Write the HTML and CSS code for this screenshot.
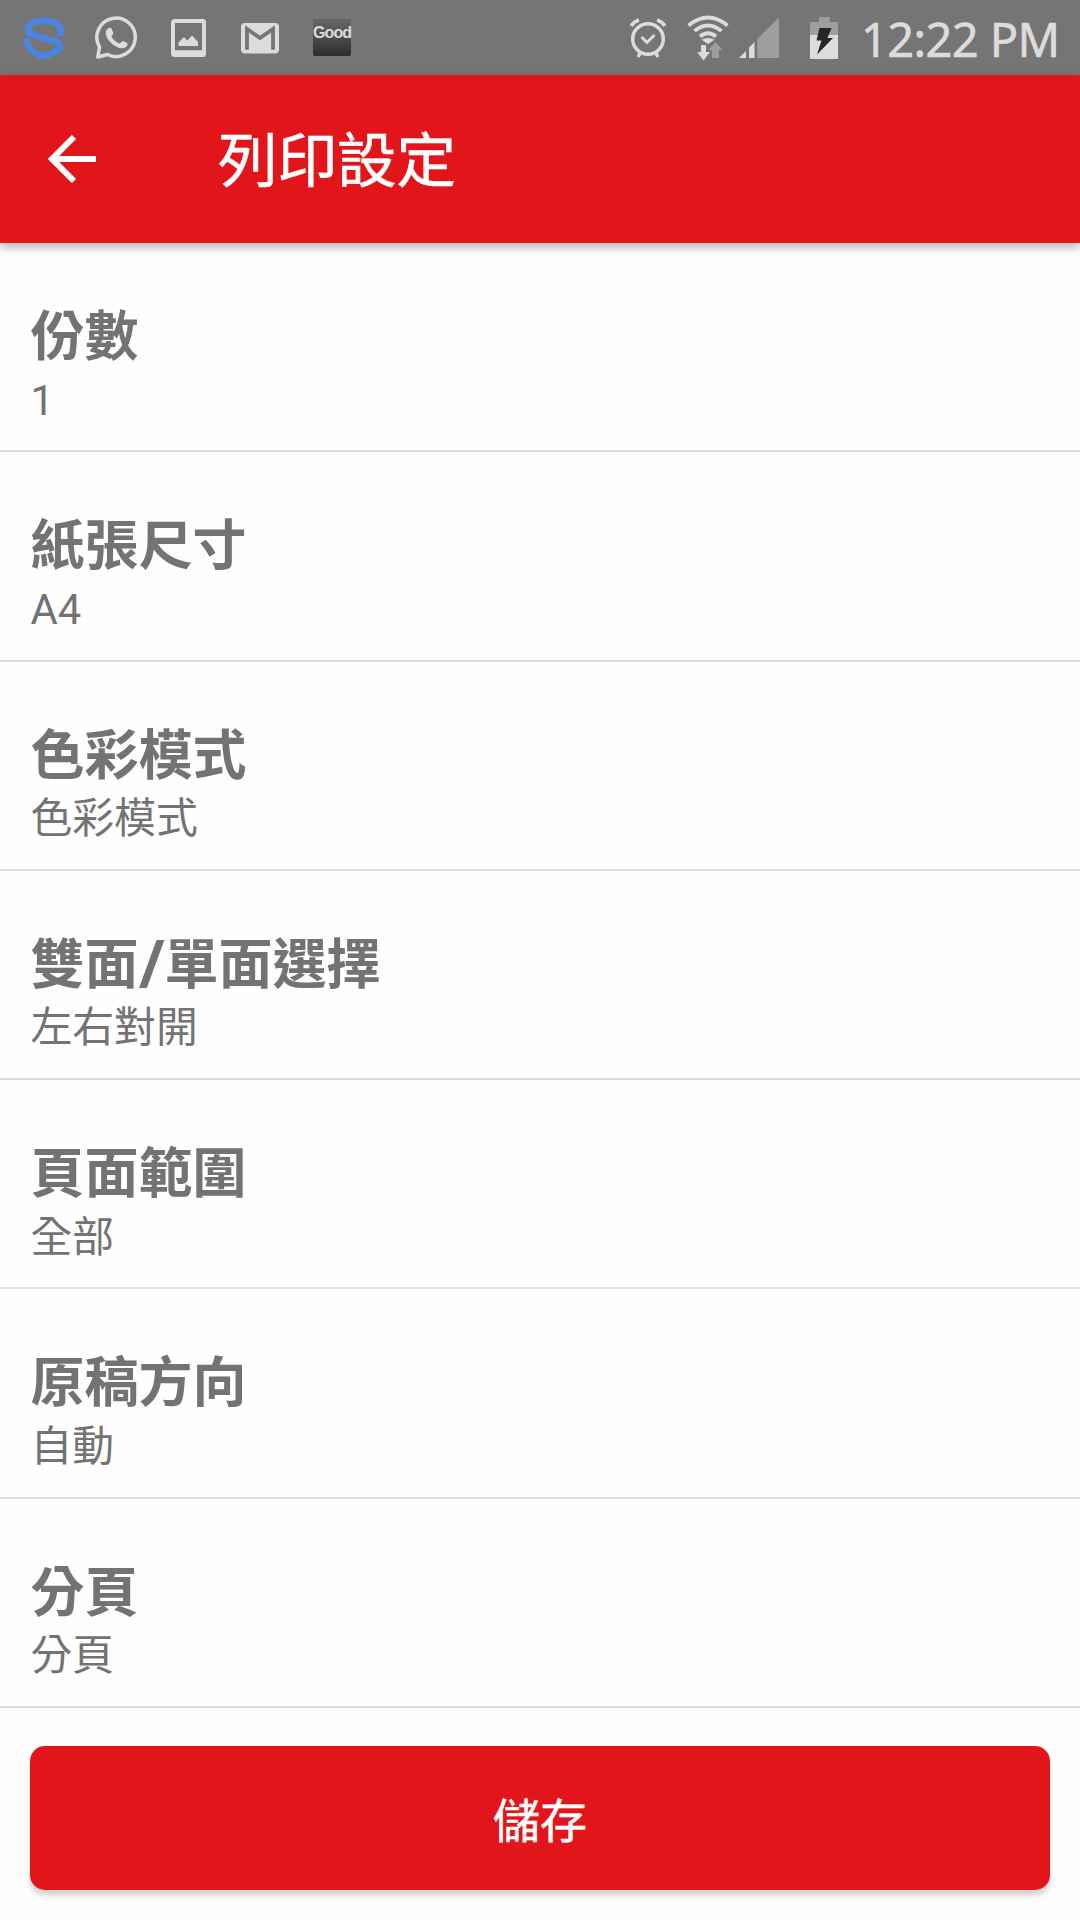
FILE: index.html
```html
<!DOCTYPE html>
<html lang="zh-Hant">
<head>
  <meta charset="UTF-8">
  <meta name="viewport" content="width=device-width, initial-scale=1.0">
  <title>列印設定</title>
  <link rel="stylesheet" href="styles.css">
</head>
<body>

<div class="status-bar">
  <div class="notifications">
    <svg width="42" height="44" viewBox="0 0 42 44" fill="none" stroke="#4d84e0" stroke-width="6.5">
      <path d="M37.500 20V13Q36 5 21 5T5 13Q4 17 9 18.500L33 25.500Q39 28 36 33.500Q31 37 21 40.500Q8 37 5 30Q4 27 4 22.500"/>
    </svg>
    <svg width="42" height="44" viewBox="0 0 42 44">
      <path d="M4.500 31A19.200 19.200 0 1 1 12.500 38.500L2.800 41Z" fill="none" stroke="#dcdcdc" stroke-width="3.500" stroke-linejoin="round"/>
      <path d="M13 12.500C14 11.500 16 11.500 16.700 13L18.300 17C18.500 18 16.300 20 16.500 20.500C18 23.500 20.500 26 24.500 27.500C25.500 27.500 27 24.700 28 24.900L32.200 27C34 29.500 30 32.300 27.500 32.300C20 32.300 10 23 10.800 16C11 14.500 12 13.200 13 12.500Z" fill="#dcdcdc"/>
    </svg>
    <svg width="36" height="38" viewBox="0 0 36 38" fill="#dcdcdc">
      <path fill-rule="evenodd" d="M4 0H32Q35 0 35 3.500V34.500Q35 38 32 38H4Q0 38 0 34.500V3.500Q0 0 4 0ZM4 4V31.300H31V4Z"/>
      <path d="M7.500 27V23.500L13 18L16.300 21.500L21 16.500L27 23V27Z"/>
    </svg>
    <svg width="38" height="32" viewBox="0 0 38 32">
      <rect y="1" width="38" height="30.500" rx="4" fill="#dcdcdc"/>
      <path d="M6 27.700V7L19 16L32 7V27.700" fill="none" stroke="#757575" stroke-width="3.800"/>
    </svg>
    <div class="good-icon">Good</div>
  </div>
  <div class="system-icons">
    <svg width="36" height="40" viewBox="0 0 36 40" fill="none" stroke="#dcdcdc" stroke-width="3.500">
      <circle cx="18" cy="21" r="15.300"/>
      <path d="M11.500 19L17 24.500L24.500 17" stroke-width="3"/>
      <path d="M1 8Q4 3.500 9 2M27 2Q32 3.500 35 8M10.500 34.500L8 39M25.500 34.500L28 39"/>
    </svg>
    <svg class="wifi" width="42" height="46" viewBox="0 0 42 46">
      <path d="M1.500 10.500Q21-5.500 40.500 10.500M7.500 16Q21 5 34.500 16M13 21.500Q21 15 29 21.500" fill="none" stroke="#dcdcdc" stroke-width="4"/>
      <path d="M14.500 24.800Q21 21 27.500 24.800L21 29Z" fill="#dcdcdc"/>
      <path d="M14 30H19V37H23L16.500 45.500L10 37H14Z" fill="#dcdcdc"/>
      <path d="M28 43H32V35H35.500L28.500 27L21.500 35H25V43Z" fill="#9e9e9e"/>
    </svg>
    <svg class="signal" width="41" height="42" viewBox="0 0 41 42">
      <path d="M18.300 22L40 0.500V41H18.300Z" fill="#9e9e9e"/>
      <path d="M0 41L7 34V41ZM10 30.500L15.500 25V41H10Z" fill="#dcdcdc"/>
    </svg>
    <svg class="battery" width="28" height="43" viewBox="0 0 28 43">
      <path d="M0 6H9V1H20V6H28V20H0Z" fill="#9e9e9e"/>
      <path d="M0 19H28V43H0Z" fill="#dcdcdc"/>
      <path d="M9.500 12H21.500L17.500 22H23L7 38.500L11.500 24.500H6.500Z" fill="#262626"/>
    </svg>
    <span class="clock">12:22 PM</span>
  </div>
</div>

<header class="app-bar">
  <svg class="back" width="48" height="48" viewBox="0 0 48 48" fill="none" stroke="#fff" stroke-width="6">
    <path d="M26 2L4 24L26 46M4 24H48"/>
  </svg>
  <h1 class="title">列印設定</h1>
</header>

<main class="settings">
  <div class="row">
    <div class="label">份數</div>
    <div class="value">1</div>
  </div>
  <div class="row">
    <div class="label">紙張尺寸</div>
    <div class="value">A4</div>
  </div>
  <div class="row">
    <div class="label">色彩模式</div>
    <div class="value">色彩模式</div>
  </div>
  <div class="row">
    <div class="label">雙面<span class="slash">/</span>單面選擇</div>
    <div class="value">左右對開</div>
  </div>
  <div class="row">
    <div class="label">頁面範圍</div>
    <div class="value">全部</div>
  </div>
  <div class="row">
    <div class="label">原稿方向</div>
    <div class="value">自動</div>
  </div>
  <div class="row">
    <div class="label">分頁</div>
    <div class="value">分頁</div>
  </div>
</main>

<button class="save">儲存</button>

</body>
</html>
```
FILE: styles.css
```css
* {
  box-sizing: border-box;
}

body {
  display: flex;
  flex-direction: column;
  height: 1920px;
  margin: 0;
  overflow: hidden;
  font-family: Roboto, "Noto Sans CJK TC", sans-serif;
  background-color: #fefefe;
}

.status-bar {
  display: flex;
  justify-content: space-between;
  align-items: center;
  height: 75px;
  padding: 0 23px;
  background-color: #757575;
}

.notifications {
  display: flex;
  align-items: center;
}

.notifications svg {
  margin-right: 30px;
}

.notifications svg:nth-child(2),
.notifications svg:nth-child(3),
.notifications svg:nth-child(4) {
  margin-right: 34px;
}

.good-icon {
  width: 38px;
  height: 37px;
  border-radius: 2px;
  background: linear-gradient(#666, #4a4d4b 50%, #2b2d2c);
  color: #dcdcdc;
  font: bold 16px/27px "Liberation Sans", sans-serif;
  text-align: center;
  letter-spacing: -0.9px;
}

.system-icons {
  display: flex;
  align-items: center;
}

.wifi {
  margin-left: 21px;
}

.signal {
  margin-left: 10px;
}

.battery {
  margin-left: 30px;
}

.clock {
  width: 196px;
  margin-left: 23px;
  padding-top: 3px;
  color: #dcdcdc;
  font: 47px/72px "Noto Sans", sans-serif;
  letter-spacing: -0.6px;
  white-space: nowrap;
  -webkit-text-stroke: 0.6px #dcdcdc;
}

.app-bar {
  display: flex;
  align-items: center;
  height: 168px;
  padding-left: 48px;
  background-color: #e2151b;
  box-shadow: 0 4px 9px rgba(0, 0, 0, 0.3);
}

.title {
  margin: 0 0 0 122px;
  padding-top: 6px;
  color: #fff;
  font-size: 59.5px;
  font-weight: 400;
  line-height: 80px;
  -webkit-text-stroke: 0.6px #fff;
}

.row {
  height: 209.25px;
  padding: 60px 0 0 30.5px;
  border-bottom: 2px solid #dcdcdc;
  color: #737373;
}

.label {
  height: 70.5px;
  font-size: 54px;
  font-weight: 700;
  line-height: 70px;
}

.slash {
  display: inline-block;
  width: 26px;
  font-family: "Noto Sans", sans-serif;
  font-size: 66px;
  font-weight: 600;
  line-height: 50px;
  text-align: center;
  vertical-align: -4px;
}

.value {
  font-size: 41.8px;
  line-height: 54px;
}

.save {
  flex: none;
  height: 144px;
  margin: 38px 30px 0;
  border: none;
  border-radius: 15px;
  background-color: #e2151b;
  box-shadow: 0 6px 5px rgba(0, 0, 0, 0.16);
  color: #fff;
  font-family: inherit;
  font-size: 47px;
  -webkit-text-stroke: 0.5px #fff;
}
```
